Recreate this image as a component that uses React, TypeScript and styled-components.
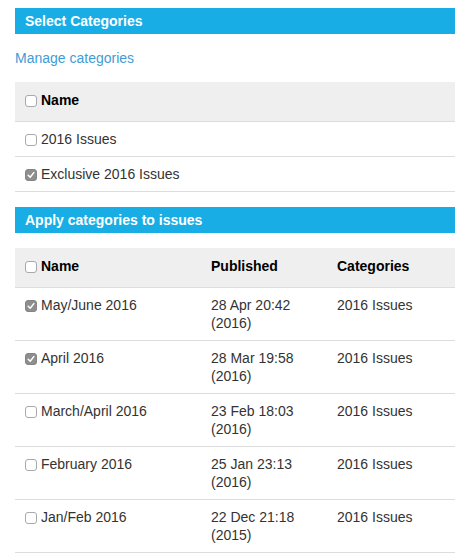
import React from 'react';
import styled, { createGlobalStyle, css } from 'styled-components';

const GlobalStyle = createGlobalStyle`
  html, body {
    margin: 0;
    padding: 0;
    background: #ffffff;
  }
  body {
    font-family: 'Liberation Sans', Arial, Helvetica, sans-serif;
    font-size: 14px;
    color: #333333;
  }
`;

type Issue = {
  name: string;
  published: string;
  year: string;
  category: string;
  checked: boolean;
};

const categories = [
  { name: '2016 Issues', checked: false },
  { name: 'Exclusive 2016 Issues', checked: true },
];

const issues: Issue[] = [
  { name: 'May/June 2016', published: '28 Apr 20:42', year: '(2016)', category: '2016 Issues', checked: true },
  { name: 'April 2016', published: '28 Mar 19:58', year: '(2016)', category: '2016 Issues', checked: true },
  { name: 'March/April 2016', published: '23 Feb 18:03', year: '(2016)', category: '2016 Issues', checked: false },
  { name: 'February 2016', published: '25 Jan 23:13', year: '(2016)', category: '2016 Issues', checked: false },
  { name: 'Jan/Feb 2016', published: '22 Dec 21:18', year: '(2015)', category: '2016 Issues', checked: false },
];

const Box = ({ checked }: { checked?: boolean }) => (
  <CheckBox $checked={checked}>
    {checked && (
      <svg width="8" height="8" viewBox="0 0 8 8">
        <path d="M1.2 4.2 L3.2 6.2 L6.8 1.6" fill="none" stroke="#ffffff" strokeWidth="1.5" strokeLinecap="round" strokeLinejoin="round" />
      </svg>
    )}
  </CheckBox>
);

const App = () => (
  <>
    <GlobalStyle />
    <Page>
      <SectionTitle>Select Categories</SectionTitle>
      <ManageLink href="#">Manage categories</ManageLink>
      <CategoryTable>
        <HeadRow>
          <HeadCell>
            <Label>
              <Box />
              Name
            </Label>
          </HeadCell>
        </HeadRow>
        {categories.map((c) => (
          <Row key={c.name}>
            <Cell>
              <Label>
                <Box checked={c.checked} />
                {c.name}
              </Label>
            </Cell>
          </Row>
        ))}
      </CategoryTable>

      <SectionTitle>Apply categories to issues</SectionTitle>
      <IssueTable>
        <HeadRow $issue>
          <HeadCell>
            <Label>
              <Box />
              Name
            </Label>
          </HeadCell>
          <HeadCell>Published</HeadCell>
          <HeadCell>Categories</HeadCell>
        </HeadRow>
        {issues.map((i) => (
          <Row key={i.name} $issue>
            <Cell>
              <Label>
                <Box checked={i.checked} />
                {i.name}
              </Label>
            </Cell>
            <Cell>
              {i.published}
              <br />
              {i.year}
            </Cell>
            <Cell>{i.category}</Cell>
          </Row>
        ))}
      </IssueTable>
    </Page>
  </>
);

const Page = styled.div`
  width: 440px;
  padding: 8px 6px 0 15px;
  display: flex;
  flex-direction: column;
`;

const SectionTitle = styled.div`
  background: #18ade5;
  color: #ffffff;
  font-weight: bold;
  font-size: 14px;
  line-height: 18px;
  padding: 4px 10px;
`;

const ManageLink = styled.a`
  display: block;
  color: #3f9cd6;
  text-decoration: none;
  line-height: 20px;
  margin: 14px 0;
`;

const CategoryTable = styled.div`
  display: flex;
  flex-direction: column;
  margin-bottom: 15px;
`;

const IssueTable = styled.div`
  display: flex;
  flex-direction: column;
  margin-top: 15px;
`;

const rowGrid = css<{ $issue?: boolean }>`
  display: grid;
  grid-template-columns: ${({ $issue }) => ($issue ? '186px 126px 1fr' : '1fr')};
  border-bottom: 1px solid #dddddd;
`;

const HeadRow = styled.div<{ $issue?: boolean }>`
  ${rowGrid}
  background: #efefef;
`;

const Row = styled.div<{ $issue?: boolean }>`
  ${rowGrid}
`;

const HeadCell = styled.div`
  padding: 9px 10px 11px;
  line-height: 19px;
  font-weight: bold;
  color: #000000;
`;

const Cell = styled.div`
  padding: 8px 10px;
  line-height: 18px;
  color: #333333;
`;

const Label = styled.div`
  display: flex;
  align-items: center;
`;

const CheckBox = styled.span<{ $checked?: boolean }>`
  box-sizing: border-box;
  flex: none;
  width: 12px;
  height: 12px;
  margin: 1px 4px 0 0;
  border-radius: 3px;
  display: flex;
  align-items: center;
  justify-content: center;
  ${({ $checked }) =>
    $checked
      ? css`
          background: #8e8e8e;
          border: 1px solid #858585;
        `
      : css`
          background: #ffffff;
          border: 1px solid #a9a9a9;
        `}
`;

export default App;
